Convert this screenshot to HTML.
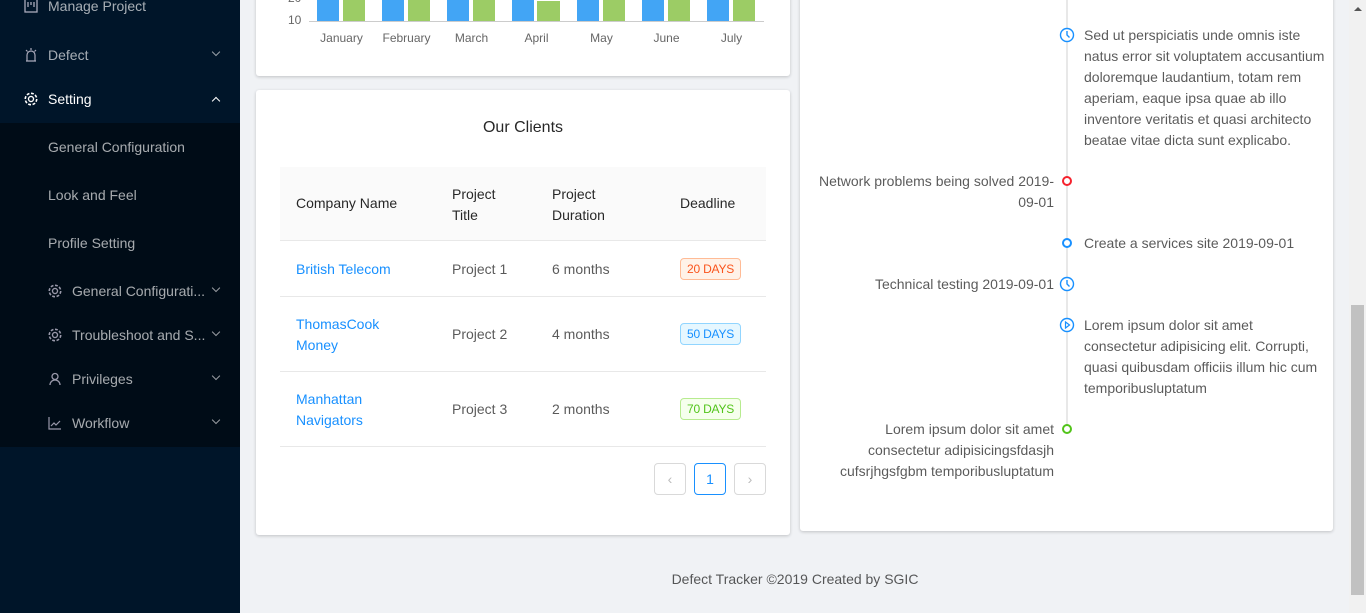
<!DOCTYPE html><html><head><style>
*{margin:0;padding:0;box-sizing:border-box}
body{width:1366px;height:613px;overflow:hidden;background:#f0f2f5;font-family:"Liberation Sans",sans-serif;font-size:14px;color:rgba(0,0,0,.65);position:relative}
.a{position:absolute}
.sb{left:0;top:0;width:240px;height:613px;background:#001529}
.sub{left:0;top:123px;width:240px;height:324px;background:#000c17}
.mi{position:absolute;left:48px;color:rgba(255,255,255,.65);font-size:14px}
.ch{position:absolute;left:213px;width:6px;height:6px;border-right:1.3px solid rgba(255,255,255,.6);border-bottom:1.3px solid rgba(255,255,255,.6);transform:rotate(45deg)}
.card{background:#fff;border-radius:3px;box-shadow:0 1px 3px rgba(0,0,0,.2)}
.bar{position:absolute;top:0;height:21px}
.ml{position:absolute;top:31px;font-size:12px;color:#666;font-family:"Liberation Sans",sans-serif;width:65px;text-align:center}
.tag{position:absolute;font-size:12px;height:22px;line-height:20px;padding:0 6px;border-radius:4px;border:1px solid;letter-spacing:-.2px}
.tl{position:absolute;font-size:14px;line-height:21px}
.dot{position:absolute;width:10px;height:10px;border-radius:50%;border:2px solid;background:#fff}
</style></head><body>
<div class="a sb"></div>
<div class="a sub"></div>
<svg class="a" style="left:24px;top:0" width="14" height="14" viewBox="0 0 14 14"><rect x="1" y="-1" width="12" height="13" fill="none" stroke="#aab" stroke-width="1.3"/><path d="M4 2v5M7 2v3M10 2v5" stroke="#aab" stroke-width="1.3"/></svg>
<div class="mi" style="top:-2px">Manage Project</div>
<svg class="a" style="left:24px;top:47px" width="14" height="16" viewBox="0 0 14 16"><path d="M2 14h10M3 14V8a4 4 0 018 0v6M7 1v2M2 3l1.5 1.5M12 3l-1.5 1.5" stroke="#aab" stroke-width="1.2" fill="none"/></svg>
<div class="mi" style="top:47px">Defect</div><div class="ch" style="top:49px"></div>
<svg class="a" style="left:23px;top:91px" width="16" height="16" viewBox="0 0 14 14"><circle cx="7" cy="7" r="5" fill="none" stroke="#fff" stroke-width="1.4" stroke-dasharray="2.5 1.4"/><circle cx="7" cy="7" r="2.2" fill="none" stroke="#fff" stroke-width="1.2"/></svg>
<div class="mi" style="top:91px;color:#fff">Setting</div>
<div class="a" style="left:213px;top:98px;width:6px;height:6px;border-left:1.5px solid #fff;border-top:1.5px solid #fff;transform:rotate(45deg)"></div>
<div class="mi" style="top:139px">General Configuration</div>
<div class="mi" style="top:187px">Look and Feel</div>
<div class="mi" style="top:235px">Profile Setting</div>
<svg class="a" style="left:47px;top:283px" width="16" height="16" viewBox="0 0 14 14"><circle cx="7" cy="7" r="5" fill="none" stroke="#99a" stroke-width="1.4" stroke-dasharray="2.5 1.4"/><circle cx="7" cy="7" r="2.2" fill="none" stroke="#99a" stroke-width="1.2"/></svg>
<div class="mi" style="left:72px;top:283px">General Configurati...</div><div class="ch" style="top:285px"></div>
<svg class="a" style="left:47px;top:327px" width="16" height="16" viewBox="0 0 14 14"><circle cx="7" cy="7" r="5" fill="none" stroke="#99a" stroke-width="1.4" stroke-dasharray="2.5 1.4"/><circle cx="7" cy="7" r="2.2" fill="none" stroke="#99a" stroke-width="1.2"/></svg>
<div class="mi" style="left:72px;top:327px">Troubleshoot and S...</div><div class="ch" style="top:329px"></div>
<svg class="a" style="left:48px;top:372px" width="14" height="14" viewBox="0 0 14 14"><circle cx="7" cy="4.5" r="3" fill="none" stroke="#99a" stroke-width="1.3"/><path d="M2 13a5 5 0 0110 0" fill="none" stroke="#99a" stroke-width="1.3"/></svg>
<div class="mi" style="left:72px;top:371px">Privileges</div><div class="ch" style="top:373px"></div>
<svg class="a" style="left:48px;top:416px" width="14" height="14" viewBox="0 0 14 14"><path d="M1 1v12h12M3 10l3-3 2 2 4-4" fill="none" stroke="#99a" stroke-width="1.2"/></svg>
<div class="mi" style="left:72px;top:415px">Workflow</div><div class="ch" style="top:417px"></div>

<div class="a card" style="left:256px;top:-10px;width:534px;height:86px">
<div class="a" style="left:53px;top:31px;width:455px;height:1px;background:#ccc"></div>
<div class="a" style="left:32px;top:23px;font-size:12px;color:#666">10</div>
<div class="a" style="left:32px;top:1px;font-size:12px;color:#666">20</div>
</div>
<div class="a" style="left:309px;top:0;width:455px;height:45px">
<div class="bar" style="left:8px;width:22px;background:#42a5f5"></div><div class="bar" style="left:34px;width:22px;background:#9ccc65"></div>
<div class="bar" style="left:73px;width:22px;background:#42a5f5"></div><div class="bar" style="left:99px;width:22px;background:#9ccc65"></div>
<div class="bar" style="left:138px;width:22px;background:#42a5f5"></div><div class="bar" style="left:164px;width:22px;background:#9ccc65"></div>
<div class="bar" style="left:203px;width:22px;background:#42a5f5"></div><div class="bar" style="left:228px;width:23px;top:1px;height:20px;background:#9ccc65"></div>
<div class="bar" style="left:268px;width:22px;background:#42a5f5"></div><div class="bar" style="left:294px;width:22px;background:#9ccc65"></div>
<div class="bar" style="left:333px;width:22px;background:#42a5f5"></div><div class="bar" style="left:359px;width:22px;background:#9ccc65"></div>
<div class="bar" style="left:398px;width:22px;background:#42a5f5"></div><div class="bar" style="left:424px;width:22px;background:#9ccc65"></div>
<div class="ml" style="left:0">January</div><div class="ml" style="left:65px">February</div><div class="ml" style="left:130px">March</div><div class="ml" style="left:195px">April</div><div class="ml" style="left:260px">May</div><div class="ml" style="left:325px">June</div><div class="ml" style="left:390px">July</div>
</div>

<div class="a card" style="left:256px;top:90px;width:534px;height:445px">
<div class="a" style="left:0;top:29px;width:534px;text-align:center;font-size:16px;color:rgba(0,0,0,.85)">Our Clients</div>
<div class="a" style="left:24px;top:77px;width:486px;height:74px;background:#fafafa;border-bottom:1px solid #e8e8e8"></div>
<div class="a" style="left:40px;top:105px;color:rgba(0,0,0,.85)">Company Name</div>
<div class="a" style="left:196px;top:94px;color:rgba(0,0,0,.85);line-height:21px">Project<br>Title</div>
<div class="a" style="left:296px;top:94px;color:rgba(0,0,0,.85);line-height:21px">Project<br>Duration</div>
<div class="a" style="left:424px;top:105px;color:rgba(0,0,0,.85)">Deadline</div>
<div class="a" style="left:40px;top:171px;color:#1890ff">British Telecom</div>
<div class="a" style="left:196px;top:171px">Project 1</div><div class="a" style="left:296px;top:171px">6 months</div>
<span class="tag" style="left:424px;top:168px;color:#fa541c;background:#fff2e8;border-color:#ffbb96">20 DAYS</span>
<div class="a" style="left:24px;top:206px;width:486px;height:1px;background:#e8e8e8"></div>
<div class="a" style="left:40px;top:224px;color:#1890ff;line-height:21px">ThomasCook<br>Money</div>
<div class="a" style="left:196px;top:236px">Project 2</div><div class="a" style="left:296px;top:236px">4 months</div>
<span class="tag" style="left:424px;top:233px;color:#1890ff;background:#e6f7ff;border-color:#91d5ff">50 DAYS</span>
<div class="a" style="left:24px;top:281px;width:486px;height:1px;background:#e8e8e8"></div>
<div class="a" style="left:40px;top:299px;color:#1890ff;line-height:21px">Manhattan<br>Navigators</div>
<div class="a" style="left:196px;top:311px">Project 3</div><div class="a" style="left:296px;top:311px">2 months</div>
<span class="tag" style="left:424px;top:308px;color:#52c41a;background:#f6ffed;border-color:#b7eb8f">70 DAYS</span>
<div class="a" style="left:24px;top:356px;width:486px;height:1px;background:#e8e8e8"></div>
<div class="a" style="left:398px;top:373px;width:32px;height:32px;border:1px solid #d9d9d9;border-radius:4px;color:#bbb;text-align:center;line-height:30px">&lsaquo;</div>
<div class="a" style="left:438px;top:373px;width:32px;height:32px;border:1px solid #1890ff;border-radius:4px;color:#1890ff;text-align:center;line-height:30px">1</div>
<div class="a" style="left:478px;top:373px;width:32px;height:32px;border:1px solid #d9d9d9;border-radius:4px;color:#bbb;text-align:center;line-height:30px">&rsaquo;</div>
</div>

<div class="a card" style="left:800px;top:-10px;width:533px;height:541px"></div>
<div class="a" style="left:1066px;top:0;width:2px;height:430px;background:#e8e8e8"></div>
<svg class="a" style="left:1059px;top:27px" width="16" height="16" viewBox="0 0 16 16"><circle cx="8" cy="8" r="6.5" fill="#fff" stroke="#1890ff" stroke-width="1.4"/><path d="M8 4v4l2.5 2.5" fill="none" stroke="#1890ff" stroke-width="1.4"/></svg>
<div class="tl" style="left:1084px;top:25px;width:245px">Sed ut perspiciatis unde omnis iste natus error sit voluptatem accusantium doloremque laudantium, totam rem aperiam, eaque ipsa quae ab illo inventore veritatis et quasi architecto beatae vitae dicta sunt explicabo.</div>
<div class="dot" style="left:1062px;top:176px;border-color:#f5222d"></div>
<div class="tl" style="left:800px;top:171px;width:254px;text-align:right">Network problems being solved 2019-09-01</div>
<div class="dot" style="left:1062px;top:238px;border-color:#1890ff"></div>
<div class="tl" style="left:1084px;top:233px">Create a services site 2019-09-01</div>
<svg class="a" style="left:1059px;top:276px" width="16" height="16" viewBox="0 0 16 16"><circle cx="8" cy="8" r="6.5" fill="#fff" stroke="#1890ff" stroke-width="1.4"/><path d="M8 4v4l2.5 2.5" fill="none" stroke="#1890ff" stroke-width="1.4"/></svg>
<div class="tl" style="left:800px;top:274px;width:254px;text-align:right">Technical testing 2019-09-01</div>
<svg class="a" style="left:1059px;top:317px" width="16" height="16" viewBox="0 0 16 16"><circle cx="8" cy="8" r="6.5" fill="#fff" stroke="#1890ff" stroke-width="1.4"/><path d="M6.5 5v6l4-3z" fill="none" stroke="#1890ff" stroke-width="1.2"/></svg>
<div class="tl" style="left:1084px;top:315px;width:245px">Lorem ipsum dolor sit amet consectetur adipisicing elit. Corrupti, quasi quibusdam officiis illum hic cum temporibusluptatum</div>
<div class="dot" style="left:1062px;top:424px;border-color:#52c41a"></div>
<div class="tl" style="left:804px;top:419px;width:250px;text-align:right">Lorem ipsum dolor sit amet<br>consectetur adipisicingsfdasjh<br>cufsrjhgsfgbm temporibusluptatum</div>

<div class="a" style="left:240px;top:571px;width:1110px;text-align:center">Defect Tracker ©2019 Created by SGIC</div>
<div class="a" style="left:1349px;top:0;width:17px;height:613px;background:#f1f1f1"></div>
<div class="a" style="left:1354px;top:7px;width:0;height:0;border-left:4px solid transparent;border-right:4px solid transparent;border-bottom:4px solid #555"></div>
<div class="a" style="left:1351px;top:305px;width:13px;height:290px;background:#c1c1c1"></div>
</body></html>
